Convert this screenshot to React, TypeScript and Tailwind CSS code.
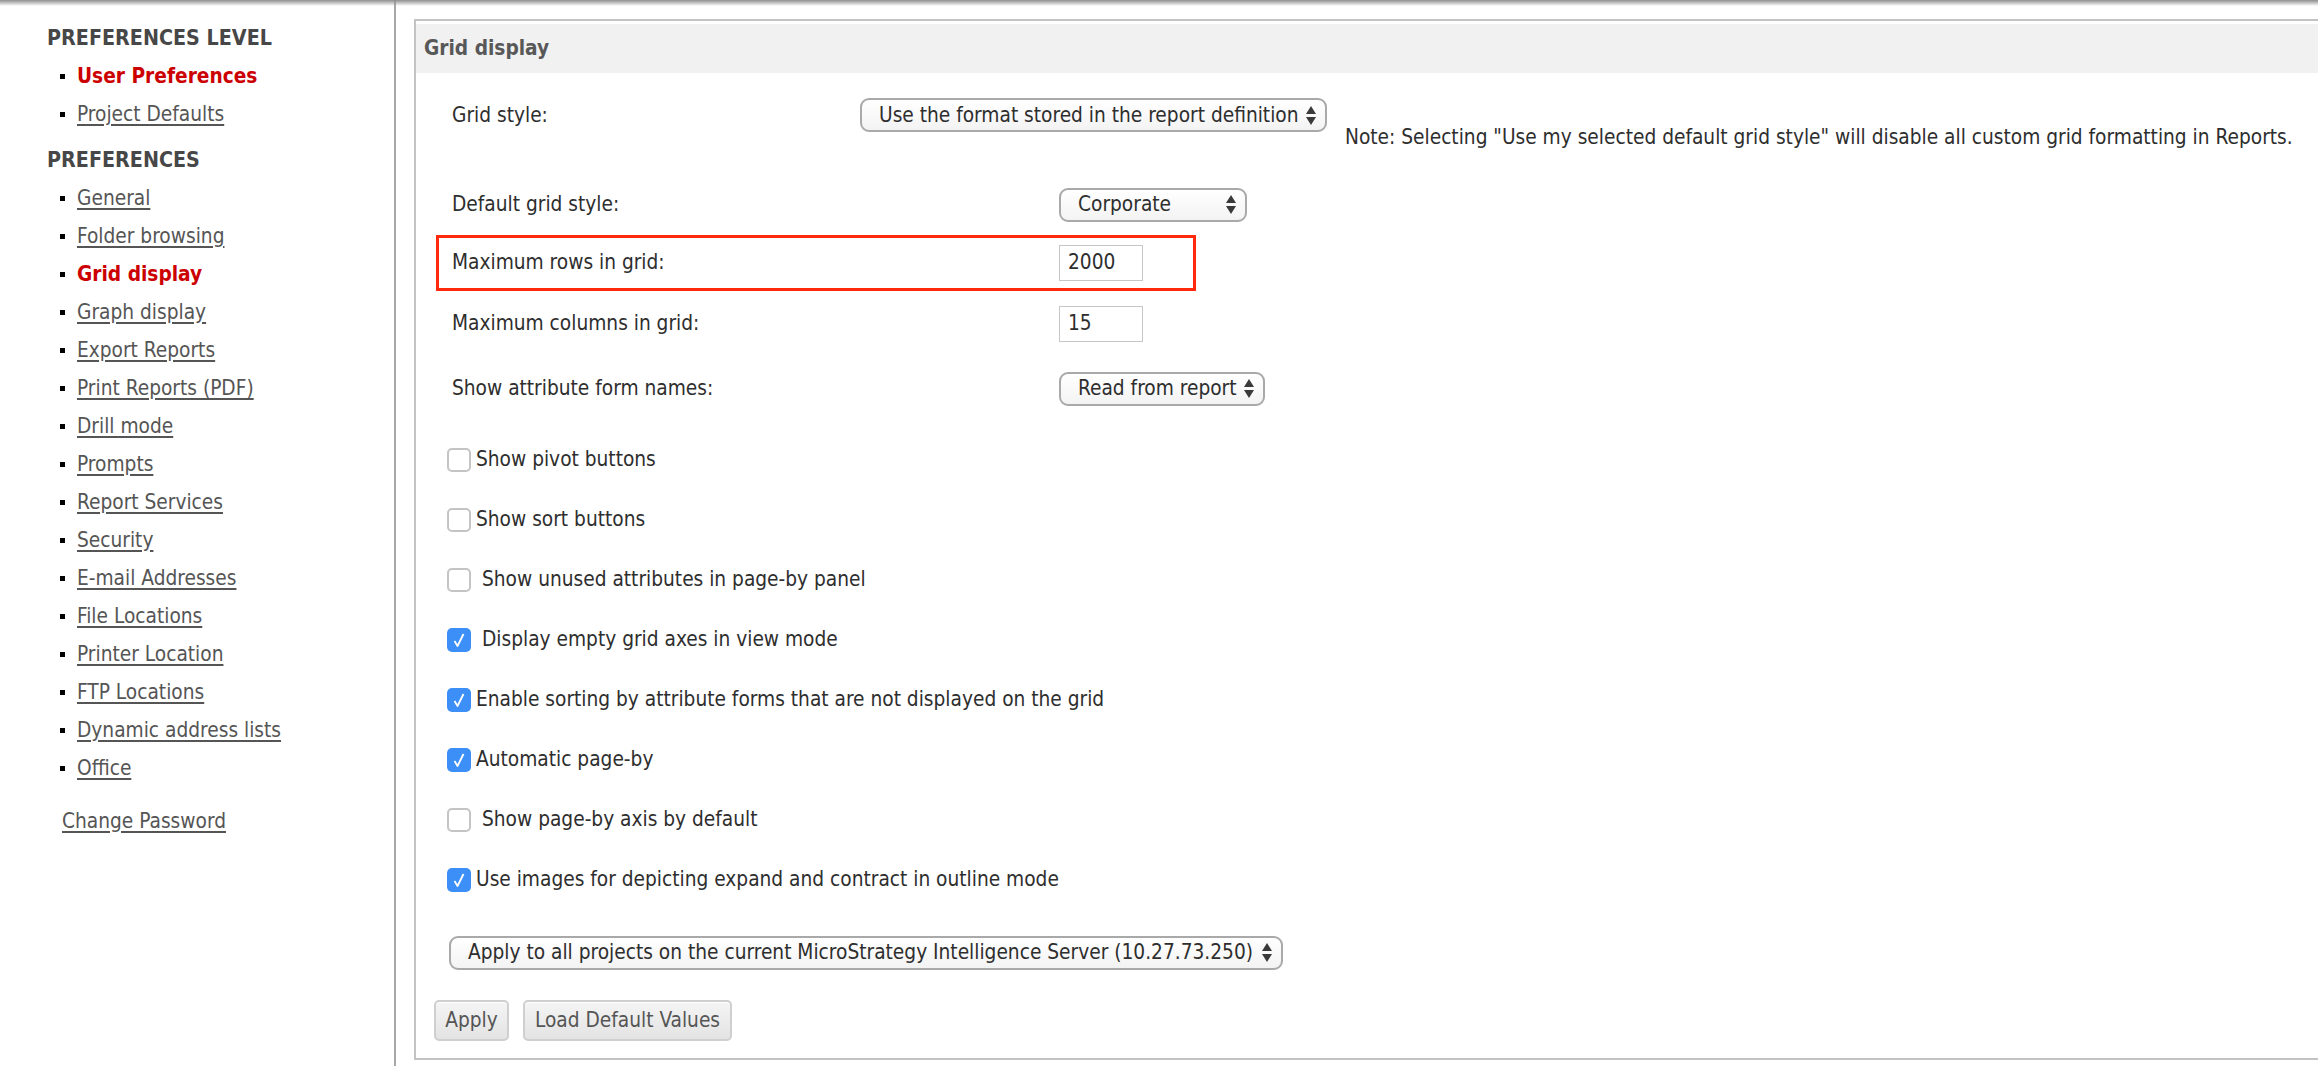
import React from 'react';

const sideLinks = [
  'General',
  'Folder browsing',
  'Grid display',
  'Graph display',
  'Export Reports',
  'Print Reports (PDF)',
  'Drill mode',
  'Prompts',
  'Report Services',
  'Security',
  'E-mail Addresses',
  'File Locations',
  'Printer Location',
  'FTP Locations',
  'Dynamic address lists',
  'Office',
];

const options = [
  { label: 'Show pivot buttons', checked: false, wide: false },
  { label: 'Show sort buttons', checked: false, wide: false },
  { label: 'Show unused attributes in page-by panel', checked: false, wide: true },
  { label: 'Display empty grid axes in view mode', checked: true, wide: true },
  { label: 'Enable sorting by attribute forms that are not displayed on the grid', checked: true, wide: false },
  { label: 'Automatic page-by', checked: true, wide: false },
  { label: 'Show page-by axis by default', checked: false, wide: true },
  { label: 'Use images for depicting expand and contract in outline mode', checked: true, wide: false },
];

const UpDown = () => (
  <svg width="10" height="19" viewBox="0 0 10 19" className="shrink-0">
    <path d="M5 0 L10 8 H0 Z" fill="#3a3a3a" />
    <path d="M5 19 L10 11 H0 Z" fill="#3a3a3a" />
  </svg>
);

const Select = ({ value, width }: { value: string; width: string }) => (
  <div
    className={`${width} h-[34px] shrink-0 flex items-center justify-between pl-[17px] pr-[9px] rounded-[9px] border-2 border-[#a9a9a9] bg-gradient-to-b from-white to-[#f3f3f3] text-[#2e2e2e] whitespace-nowrap`}
  >
    <span>{value}</span>
    <UpDown />
  </div>
);

const NumberBox = ({ value }: { value: string }) => (
  <div className="w-[84px] h-[36px] shrink-0 flex items-center pl-[8px] border border-[#c6c6c6] bg-white text-[#2e2e2e]">
    {value}
  </div>
);

const Checkbox = ({ checked }: { checked: boolean }) =>
  checked ? (
    <span className="w-[24px] h-[24px] shrink-0 rounded-[5px] bg-[#3b8ff6] flex items-center justify-center">
      <svg width="14" height="16" viewBox="0 0 14 16">
        <path d="M2.5 9 L5.5 14 L11.5 2" fill="none" stroke="white" strokeWidth="1.8" strokeLinejoin="round" />
      </svg>
    </span>
  ) : (
    <span className="w-[24px] h-[24px] shrink-0 rounded-[5px] border-2 border-[#c4c4c4] bg-white" />
  );

const FormRow = ({ label, children, highlight }: { label: string; children: React.ReactNode; highlight?: boolean }) => (
  <div
    className={`w-[760px] flex items-center pl-[13px] border-[3px] ${highlight ? 'h-[56px] border-[#ff2a0c]' : 'h-[40px] border-transparent'}`}
  >
    <span className="w-[607px] shrink-0">{label}</span>
    {children}
  </div>
);

export default function App() {
  return (
    <div className="relative w-[2318px] h-[1066px] flex bg-white overflow-hidden font-['DejaVu_Sans',sans-serif] font-stretch-condensed text-[20.7px] leading-none">
      {/* browser toolbar shadow */}
      <div className="absolute top-0 left-0 right-0 h-[6px] bg-gradient-to-b from-[#8e8e8e] to-transparent pointer-events-none" />

      {/* left navigation */}
      <aside className="w-[396px] shrink-0 h-full border-r-2 border-[#a7a7a7] pt-[19px] pl-[47px] text-[#555]">
        <h3 className="h-[38px] flex items-center font-bold text-[#474747] text-[21.3px]">PREFERENCES LEVEL</h3>
        <ul>
          <li className="h-[38px] flex items-center">
            <span className="w-[5px] h-[5px] bg-black ml-[13px] mr-[12px]" />
            <span className="font-bold text-[#cc0000]">User Preferences</span>
          </li>
          <li className="h-[38px] flex items-center">
            <span className="w-[5px] h-[5px] bg-black ml-[13px] mr-[12px]" />
            <a className="underline underline-offset-[3px]">Project Defaults</a>
          </li>
        </ul>
        <h3 className="mt-[8px] h-[38px] flex items-center font-bold text-[#474747] text-[21.3px]">PREFERENCES</h3>
        <ul>
          {sideLinks.map((l) => (
            <li key={l} className="h-[38px] flex items-center">
              <span className="w-[5px] h-[5px] bg-black ml-[13px] mr-[12px]" />
              {l === 'Grid display' ? (
                <span className="font-bold text-[#cc0000]">{l}</span>
              ) : (
                <a className="underline underline-offset-[3px]">{l}</a>
              )}
            </li>
          ))}
        </ul>
        <div className="mt-[15px] h-[38px] flex items-center pl-[15px]">
          <a className="underline underline-offset-[3px]">Change Password</a>
        </div>
      </aside>

      {/* settings panel */}
      <main className="flex-1 min-w-0 pl-[18px] pt-[19px]">
        <section className="mr-[-20px] border-2 border-[#c3c3c3] pt-[3px] pb-[17px] text-[#2e2e2e]">
          <div className="h-[49px] bg-[#f1f1f1] flex items-center pl-[8px] font-bold text-[#585858]">Grid display</div>

          <div className="pl-[20px]">
            <div className="mt-[22px] flex items-start">
              <div className="w-[424px] h-[40px] flex items-center pl-[16px] shrink-0">Grid style:</div>
              <div className="mt-[3px]">
                <Select value="Use the format stored in the report definition" width="w-[467px]" />
              </div>
              <span className="ml-[18px] mt-[32px] whitespace-nowrap">
                Note: Selecting "Use my selected default grid style" will disable all custom grid formatting in Reports.
              </span>
            </div>

            <div className="mt-[37px]">
              <FormRow label="Default grid style:">
                <Select value="Corporate" width="w-[188px]" />
              </FormRow>
            </div>
            <div className="mt-[10px]">
              <FormRow label="Maximum rows in grid:" highlight>
                <NumberBox value="2000" />
              </FormRow>
            </div>
            <div className="mt-[13px]">
              <FormRow label="Maximum columns in grid:">
                <NumberBox value="15" />
              </FormRow>
            </div>
            <div className="mt-[25px]">
              <FormRow label="Show attribute form names:">
                <Select value="Read from report" width="w-[206px]" />
              </FormRow>
            </div>

            <div className="mt-[21px] pl-[11px]">
              {options.map((o) => (
                <div key={o.label} className="h-[60px] flex items-center">
                  <Checkbox checked={o.checked} />
                  <span className={o.wide ? 'ml-[11px]' : 'ml-[5px]'}>{o.label}</span>
                </div>
              ))}
            </div>

            <div className="mt-[26px] pl-[13px]">
              <Select
                value="Apply to all projects on the current MicroStrategy Intelligence Server (10.27.73.250)"
                width="w-[834px]"
              />
            </div>
          </div>

          <div className="mt-[30px] pl-[18px] flex gap-[14px] text-[#555]">
            <button className="w-[75px] h-[41px] rounded-[5px] border-2 border-[#cfcfcf] bg-gradient-to-b from-[#f5f5f5] to-[#e3e3e3] shadow-[inset_0_1px_0_white]">
              Apply
            </button>
            <button className="w-[209px] h-[41px] rounded-[5px] border-2 border-[#cfcfcf] bg-gradient-to-b from-[#f5f5f5] to-[#e3e3e3] shadow-[inset_0_1px_0_white]">
              Load Default Values
            </button>
          </div>
        </section>
      </main>
    </div>
  );
}
